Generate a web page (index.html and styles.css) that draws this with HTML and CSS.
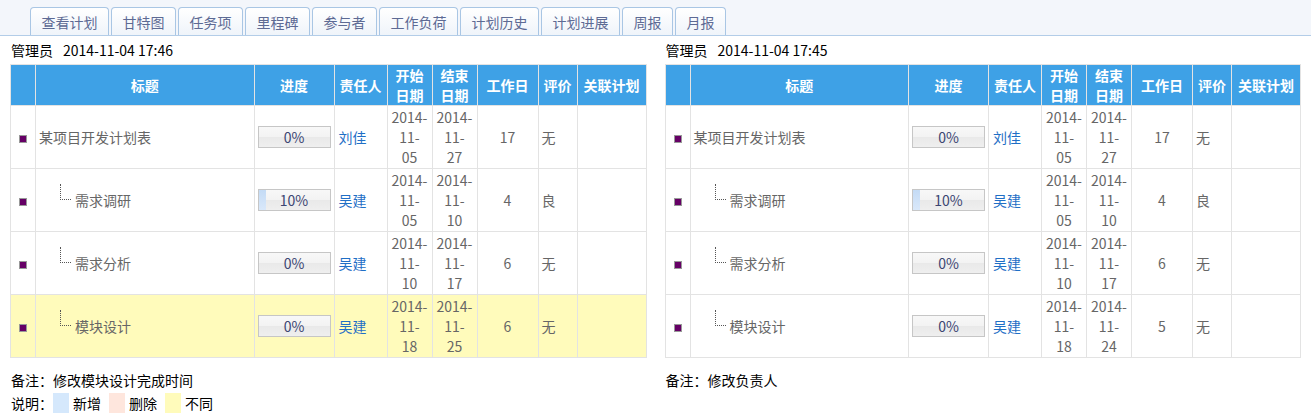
FILE: index.html
```html
<!DOCTYPE html>
<html lang="zh-CN">
<head>
    <meta charset="UTF-8">
    <title>计划历史对比</title>
    <link rel="stylesheet" href="styles.css">
</head>
<body>
    <div class="tabs">
        <a class="tab" href="#">查看计划</a>
        <a class="tab" href="#">甘特图</a>
        <a class="tab" href="#">任务项</a>
        <a class="tab" href="#">里程碑</a>
        <a class="tab" href="#">参与者</a>
        <a class="tab" href="#">工作负荷</a>
        <a class="tab" href="#">计划历史</a>
        <a class="tab" href="#">计划进展</a>
        <a class="tab" href="#">周报</a>
        <a class="tab" href="#">月报</a>
    </div>

    <div class="compare">
        <!-- 新版本 -->
        <div class="panel">
            <div class="meta"><span class="user">管理员</span>2014-11-04 17:46</div>
            <table class="plan">
                <colgroup>
                    <col class="c-mark"><col><col class="c-prog"><col class="c-owner"><col class="c-date"><col class="c-date"><col class="c-days"><col class="c-rate"><col class="c-rel">
                </colgroup>
                <thead>
                    <tr>
                        <th></th>
                        <th>标题</th>
                        <th>进度</th>
                        <th>责任人</th>
                        <th>开始日期</th>
                        <th>结束日期</th>
                        <th>工作日</th>
                        <th>评价</th>
                        <th>关联计划</th>
                    </tr>
                </thead>
                <tbody>
                    <tr>
                        <td class="mark"><i class="dot"></i></td>
                        <td class="title">某项目开发计划表</td>
                        <td><div class="bar"><span class="fill" style="width:0%"></span><em>0%</em></div></td>
                        <td class="owner"><a href="#">刘佳</a></td>
                        <td class="date">2014-<br>11-<br>05</td>
                        <td class="date">2014-<br>11-<br>27</td>
                        <td class="days">17</td>
                        <td>无</td>
                        <td></td>
                    </tr>
                    <tr>
                        <td class="mark"><i class="dot"></i></td>
                        <td class="title"><span class="branch"></span>需求调研</td>
                        <td><div class="bar"><span class="fill" style="width:10%"></span><em>10%</em></div></td>
                        <td class="owner"><a href="#">吴建</a></td>
                        <td class="date">2014-<br>11-<br>05</td>
                        <td class="date">2014-<br>11-<br>10</td>
                        <td class="days">4</td>
                        <td>良</td>
                        <td></td>
                    </tr>
                    <tr>
                        <td class="mark"><i class="dot"></i></td>
                        <td class="title"><span class="branch"></span>需求分析</td>
                        <td><div class="bar"><span class="fill" style="width:0%"></span><em>0%</em></div></td>
                        <td class="owner"><a href="#">吴建</a></td>
                        <td class="date">2014-<br>11-<br>10</td>
                        <td class="date">2014-<br>11-<br>17</td>
                        <td class="days">6</td>
                        <td>无</td>
                        <td></td>
                    </tr>
                    <tr class="diff">
                        <td class="mark"><i class="dot"></i></td>
                        <td class="title"><span class="branch"></span>模块设计</td>
                        <td><div class="bar"><span class="fill" style="width:0%"></span><em>0%</em></div></td>
                        <td class="owner"><a href="#">吴建</a></td>
                        <td class="date">2014-<br>11-<br>18</td>
                        <td class="date">2014-<br>11-<br>25</td>
                        <td class="days">6</td>
                        <td>无</td>
                        <td></td>
                    </tr>
                </tbody>
            </table>
            <p class="note">备注：修改模块设计完成时间</p>
            <p class="legend">说明：<span class="swatch add"></span><span class="label">新增</span><span class="swatch del"></span><span class="label">删除</span><span class="swatch chg"></span><span class="label">不同</span></p>
        </div>

        <!-- 旧版本 -->
        <div class="panel">
            <div class="meta"><span class="user">管理员</span>2014-11-04 17:45</div>
            <table class="plan">
                <colgroup>
                    <col class="c-mark"><col><col class="c-prog"><col class="c-owner"><col class="c-date"><col class="c-date"><col class="c-days"><col class="c-rate"><col class="c-rel">
                </colgroup>
                <thead>
                    <tr>
                        <th></th>
                        <th>标题</th>
                        <th>进度</th>
                        <th>责任人</th>
                        <th>开始日期</th>
                        <th>结束日期</th>
                        <th>工作日</th>
                        <th>评价</th>
                        <th>关联计划</th>
                    </tr>
                </thead>
                <tbody>
                    <tr>
                        <td class="mark"><i class="dot"></i></td>
                        <td class="title">某项目开发计划表</td>
                        <td><div class="bar"><span class="fill" style="width:0%"></span><em>0%</em></div></td>
                        <td class="owner"><a href="#">刘佳</a></td>
                        <td class="date">2014-<br>11-<br>05</td>
                        <td class="date">2014-<br>11-<br>27</td>
                        <td class="days">17</td>
                        <td>无</td>
                        <td></td>
                    </tr>
                    <tr>
                        <td class="mark"><i class="dot"></i></td>
                        <td class="title"><span class="branch"></span>需求调研</td>
                        <td><div class="bar"><span class="fill" style="width:10%"></span><em>10%</em></div></td>
                        <td class="owner"><a href="#">吴建</a></td>
                        <td class="date">2014-<br>11-<br>05</td>
                        <td class="date">2014-<br>11-<br>10</td>
                        <td class="days">4</td>
                        <td>良</td>
                        <td></td>
                    </tr>
                    <tr>
                        <td class="mark"><i class="dot"></i></td>
                        <td class="title"><span class="branch"></span>需求分析</td>
                        <td><div class="bar"><span class="fill" style="width:0%"></span><em>0%</em></div></td>
                        <td class="owner"><a href="#">吴建</a></td>
                        <td class="date">2014-<br>11-<br>10</td>
                        <td class="date">2014-<br>11-<br>17</td>
                        <td class="days">6</td>
                        <td>无</td>
                        <td></td>
                    </tr>
                    <tr>
                        <td class="mark"><i class="dot"></i></td>
                        <td class="title"><span class="branch"></span>模块设计</td>
                        <td><div class="bar"><span class="fill" style="width:0%"></span><em>0%</em></div></td>
                        <td class="owner"><a href="#">吴建</a></td>
                        <td class="date">2014-<br>11-<br>18</td>
                        <td class="date">2014-<br>11-<br>24</td>
                        <td class="days">5</td>
                        <td>无</td>
                        <td></td>
                    </tr>
                </tbody>
            </table>
            <p class="note">备注：修改负责人</p>
        </div>
    </div>
</body>
</html>
```

FILE: styles.css
```css
body {
    margin: 0;
    font-family: "Noto Sans CJK SC", sans-serif;
    font-size: 14px;
    color: #000;
    background-color: #fff;
}

/* tab bar */
.tabs {
    display: flex;
    align-items: flex-end;
    gap: 2px;
    height: 35px;
    padding-left: 30px;
    background-color: #f3f6fb;
    border-bottom: 1px solid #b3cde8;
}

.tab {
    height: 25px;
    padding: 2px 10.5px 0;
    line-height: 25px;
    color: #5d6a94;
    text-decoration: none;
    background: linear-gradient(#ffffff, #eff4fa);
    border: 1px solid #a9c6e4;
    border-bottom: none;
    border-radius: 4px 4px 0 0;
}

/* two versions side by side */
.compare {
    display: grid;
    grid-template-columns: 1fr 1fr;
    column-gap: 18px;
    padding: 0 10px;
}

.meta {
    margin-top: 4px;
    padding-left: 1px;
    line-height: 20px;
}

.user {
    margin-right: 10px;
}

table.plan {
    width: 100%;
    margin-top: 4px;
    table-layout: fixed;
    border-collapse: collapse;
}

.c-mark { width: 25px; }
.c-prog { width: 80px; }
.c-owner { width: 53px; }
.c-date { width: 45px; }
.c-days { width: 61px; }
.c-rate { width: 39px; }
.c-rel { width: 69px; }

th, td {
    border: 1px solid #e3e3e3;
    line-height: 20px;
    vertical-align: middle;
}

th {
    padding: 0 3px;
    color: #fff;
    font-weight: bold;
    text-align: center;
    background-color: #3ea1e6;
}

td {
    padding: 1px 3px;
    color: #666;
    text-align: left;
}

tr.diff td {
    background-color: #fffbbb;
}

td.mark {
    text-align: center;
}

.dot {
    display: inline-block;
    width: 6px;
    height: 6px;
    vertical-align: middle;
    background-color: #660066;
    border: 1px solid #999;
}

.branch {
    display: inline-block;
    width: 10px;
    height: 15px;
    margin: -6px 4px 0 21px;
    vertical-align: 6px;
    border-left: 1px dotted #555;
    border-bottom: 1px dotted #555;
}

.bar {
    position: relative;
    height: 20px;
    text-align: center;
    background: linear-gradient(#f8f8f8 0%, #f3f3f3 50%, #e9e9e9 52%, #efefef 100%);
    border: 1px solid #c6c6c6;
}

.bar .fill {
    position: absolute;
    left: 0;
    top: 0;
    bottom: 0;
    background: linear-gradient(#c4dbf5, #d9e8fa);
}

.bar em {
    position: relative;
    font-style: normal;
    color: #3b4572;
}

td.owner {
    padding-left: 4px;
}

td.owner a {
    color: #1f6fc6;
    text-decoration: none;
}

td.date, td.days {
    text-align: center;
}

.note {
    margin: 12px 0 0;
    padding-left: 1px;
    line-height: 20px;
}

.legend {
    margin: 3px 0 0;
    padding-left: 1px;
    line-height: 20px;
}

.swatch {
    display: inline-block;
    width: 16px;
    height: 20px;
    margin-right: 4px;
    vertical-align: top;
}

.swatch.add { background-color: #d5e8fc; }
.swatch.del { background-color: #fee6dd; }
.swatch.chg { background-color: #fffbbb; }

.label {
    margin-right: 8px;
}
```
